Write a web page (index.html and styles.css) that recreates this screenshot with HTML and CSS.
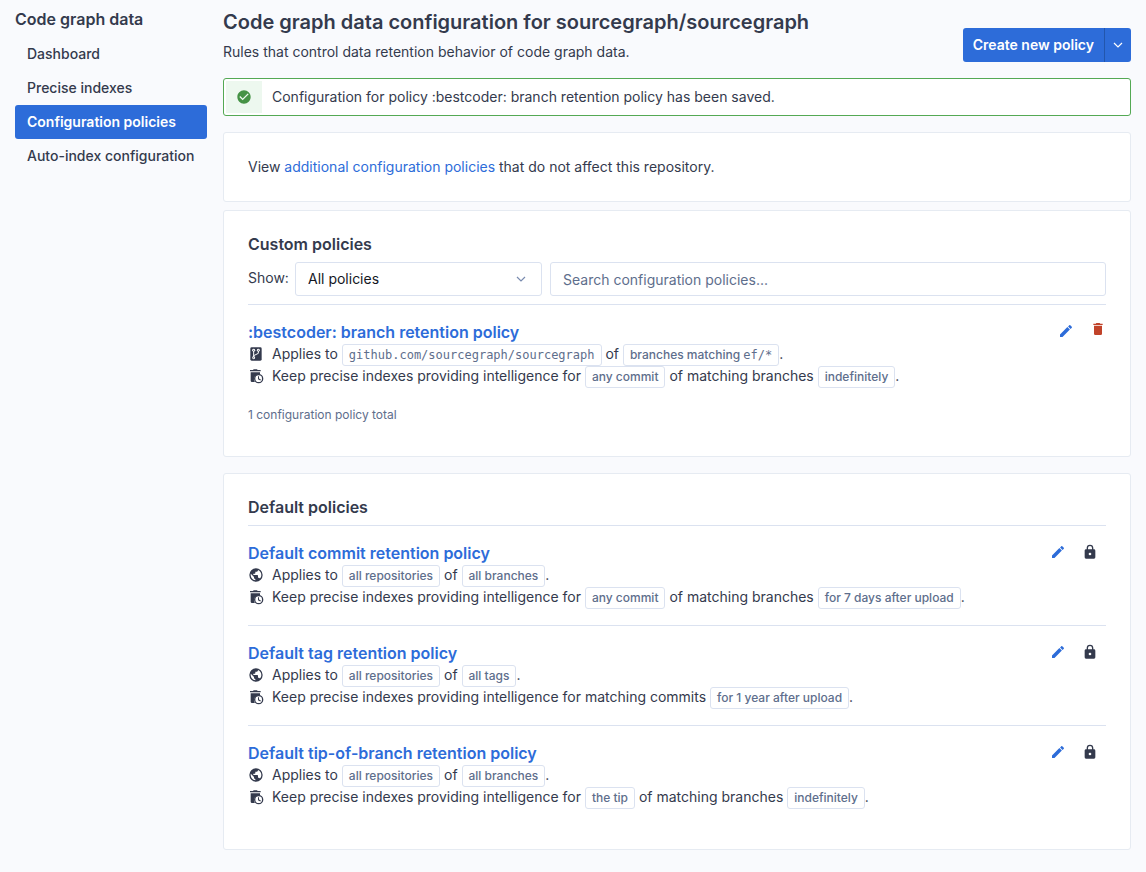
FILE: index.html
```html
<!DOCTYPE html>
<html lang="en">
<head>
<meta charset="utf-8">
<meta name="viewport" content="width=device-width, initial-scale=1">
<title>Code graph data configuration</title>
<link rel="stylesheet" href="styles.css">
</head>
<body>
<svg class="sprite" aria-hidden="true">
  <symbol id="check" viewBox="0 0 24 24"><path d="M12 2C6.5 2 2 6.5 2 12S6.5 22 12 22 22 17.5 22 12 17.5 2 12 2M10 17L5 12L6.41 10.59L10 14.17L17.59 6.58L19 8L10 17Z"/></symbol>
  <symbol id="earth" viewBox="0 0 24 24"><path d="M17.9,17.39C17.64,16.59 16.89,16 16,16H15V13A1,1 0 0,0 14,12H8V10H10A1,1 0 0,0 11,9V7H13A2,2 0 0,0 15,5V4.59C17.93,5.77 20,8.64 20,12C20,14.08 19.2,15.97 17.9,17.39M11,19.93C7.05,19.44 4,16.08 4,12C4,11.38 4.08,10.78 4.21,10.21L9,15V16A2,2 0 0,0 11,18M12,2A10,10 0 0,0 2,12A10,10 0 0,0 12,22A10,10 0 0,0 22,12A10,10 0 0,0 12,2Z"/></symbol>
  <symbol id="pencil" viewBox="0 0 24 24"><path d="M20.71,7.04C21.1,6.65 21.1,6 20.71,5.63L18.37,3.29C18,2.9 17.35,2.9 16.96,3.29L15.12,5.12L18.87,8.87M3,17.25V21H6.75L17.81,9.93L14.06,6.18L3,17.25Z"/></symbol>
  <symbol id="trash" viewBox="0 0 24 24"><path d="M19,4H15.5L14.5,3H9.5L8.5,4H5V6H19M6,19A2,2 0 0,0 8,21H16A2,2 0 0,0 18,19V7H6V19Z"/></symbol>
  <symbol id="lock" viewBox="0 0 24 24"><path d="M12,17A2,2 0 0,0 14,15C14,13.89 13.1,13 12,13A2,2 0 0,0 10,15A2,2 0 0,0 12,17M18,8A2,2 0 0,1 20,10V20A2,2 0 0,1 18,22H6A2,2 0 0,1 4,20V10C4,8.89 4.9,8 6,8H7V6A5,5 0 0,1 12,1A5,5 0 0,1 17,6V8H18M12,3A3,3 0 0,0 9,6V8H15V6A3,3 0 0,0 12,3Z"/></symbol>
  <symbol id="repo" viewBox="0 0 24 24"><rect x="3.5" y="2" width="17" height="20" rx="2"/><g fill="none" stroke="#fff" stroke-width="1.5"><path d="M8.5 7.5V17M15.5 7.5V11L8.5 14.5"/></g><g fill="#fff"><circle cx="8.5" cy="6.5" r="2.2"/><circle cx="15.5" cy="6.5" r="2.2"/><circle cx="8.5" cy="17.5" r="2.2"/></g><g><circle cx="8.5" cy="6.5" r=".8"/><circle cx="15.5" cy="6.5" r=".8"/><circle cx="8.5" cy="17.5" r=".8"/></g></symbol>
  <symbol id="expire" viewBox="0 0 24 24"><path d="M3 3H7.5L8.5 2H13.5L14.5 3H19V5H3ZM4 6.5H18V10A7 7 0 0 0 10.5 21H6A2 2 0 0 1 4 19Z"/><path fill-rule="evenodd" d="M16 9A7 7 0 1 1 16 23A7 7 0 0 1 16 9M16 11A5 5 0 1 0 16 21A5 5 0 0 0 16 11M15 12.5H16.5V15.8L19.3 17.4L18.5 18.7L15 16.7Z"/></symbol>
  <symbol id="chevron" viewBox="0 0 10 6"><path d="M1 1L5 5L9 1" fill="none" stroke="currentColor" stroke-width="1.2"/></symbol>
</svg>
<div class="page">
  <nav class="sidebar" aria-label="Code graph data">
    <h2 class="heading sidebar-heading">Code graph data</h2>
    <a class="nav-link" href="#">Dashboard</a>
    <a class="nav-link" href="#">Precise indexes</a>
    <a class="nav-link nav-active" href="#" aria-current="page">Configuration policies</a>
    <a class="nav-link" href="#">Auto-index configuration</a>
  </nav>
  <main class="main">
    <header class="header">
      <div>
        <h1 class="title">Code graph data configuration for sourcegraph/sourcegraph</h1>
        <p class="text">Rules that control data retention behavior of code graph data.</p>
      </div>
      <div class="button-group">
        <button class="button">Create new policy</button>
        <button class="button button-toggle" aria-label="More policy types"><svg class="chevron"><use href="#chevron"/></svg></button>
      </div>
    </header>
    <div class="alert" role="status">
      <span class="alert-icon"><svg class="icon"><use href="#check"/></svg></span>
      <span>Configuration for policy :bestcoder: branch retention policy has been saved.</span>
    </div>
    <section class="card">
      <p class="text">View <a class="link" href="#">additional configuration policies</a> that do not affect this repository.</p>
    </section>
    <section class="card card-custom">
      <h2 class="heading card-heading">Custom policies</h2>
      <div class="filters">
        <label class="filter-label" for="show">Show:</label>
        <div class="select-wrap">
          <select class="field select" id="show"><option>All policies</option></select>
          <svg class="chevron select-chevron"><use href="#chevron"/></svg>
        </div>
        <input class="field search" type="text" placeholder="Search configuration policies..." aria-label="Search configuration policies">
      </div>
      <article class="policy">
        <div class="policy-body">
          <h3 class="policy-title"><a class="link" href="#">:bestcoder: branch retention policy</a></h3>
          <div class="rule"><svg class="icon"><use href="#repo"/></svg><p class="rule-text">Applies to <span class="badge mono">github.com/sourcegraph/sourcegraph</span> of <span class="badge">branches matching <span class="mono">ef/*</span></span>.</p></div>
          <div class="rule"><svg class="icon"><use href="#expire"/></svg><p class="rule-text">Keep precise indexes providing intelligence for <span class="badge">any commit</span> of matching branches <span class="badge">indefinitely</span>.</p></div>
        </div>
        <div class="actions actions-custom">
          <button class="action edit" aria-label="Edit policy"><svg class="icon"><use href="#pencil"/></svg></button>
          <button class="action delete" aria-label="Delete policy"><svg class="icon"><use href="#trash"/></svg></button>
        </div>
      </article>
      <p class="total">1 configuration policy total</p>
    </section>
    <section class="card">
      <h2 class="heading card-heading">Default policies</h2>
      <article class="policy">
        <div class="policy-body">
          <h3 class="policy-title"><a class="link" href="#">Default commit retention policy</a></h3>
          <div class="rule"><svg class="icon"><use href="#earth"/></svg><p class="rule-text">Applies to <span class="badge">all repositories</span> of <span class="badge">all branches</span>.</p></div>
          <div class="rule"><svg class="icon"><use href="#expire"/></svg><p class="rule-text">Keep precise indexes providing intelligence for <span class="badge">any commit</span> of matching branches <span class="badge">for 7 days after upload</span>.</p></div>
        </div>
        <div class="actions">
          <button class="action edit" aria-label="Edit policy"><svg class="icon"><use href="#pencil"/></svg></button>
          <span class="action"><svg class="icon"><use href="#lock"/></svg></span>
        </div>
      </article>
      <article class="policy">
        <div class="policy-body">
          <h3 class="policy-title"><a class="link" href="#">Default tag retention policy</a></h3>
          <div class="rule"><svg class="icon"><use href="#earth"/></svg><p class="rule-text">Applies to <span class="badge">all repositories</span> of <span class="badge">all tags</span>.</p></div>
          <div class="rule"><svg class="icon"><use href="#expire"/></svg><p class="rule-text">Keep precise indexes providing intelligence for matching commits <span class="badge">for 1 year after upload</span>.</p></div>
        </div>
        <div class="actions">
          <button class="action edit" aria-label="Edit policy"><svg class="icon"><use href="#pencil"/></svg></button>
          <span class="action"><svg class="icon"><use href="#lock"/></svg></span>
        </div>
      </article>
      <article class="policy">
        <div class="policy-body">
          <h3 class="policy-title"><a class="link" href="#">Default tip-of-branch retention policy</a></h3>
          <div class="rule"><svg class="icon"><use href="#earth"/></svg><p class="rule-text">Applies to <span class="badge">all repositories</span> of <span class="badge">all branches</span>.</p></div>
          <div class="rule"><svg class="icon"><use href="#expire"/></svg><p class="rule-text">Keep precise indexes providing intelligence for <span class="badge">the tip</span> of matching branches <span class="badge">indefinitely</span>.</p></div>
        </div>
        <div class="actions">
          <button class="action edit" aria-label="Edit policy"><svg class="icon"><use href="#pencil"/></svg></button>
          <span class="action"><svg class="icon"><use href="#lock"/></svg></span>
        </div>
      </article>
    </section>
  </main>
</div>
</body>
</html>
```

FILE: styles.css
```css
:root {
  --ink: #343a4d;
  --muted: #5e6e8c;
  --blue: #2d6cd9;
  --line: #dbe2f0;
  --card-line: #e6ebf2;
}

* { box-sizing: border-box; }

body {
  margin: 0;
  background: #f9fafd;
  color: var(--ink);
  font: 14px/20px Inter, "Liberation Sans", sans-serif;
}

h1, h2, h3, p { margin: 0; }
a { text-decoration: none; }
button, input, select { font: inherit; }

.sprite { position: absolute; width: 0; height: 0; }
.icon { display: block; width: 16px; height: 16px; fill: currentColor; flex: none; }
.chevron { display: block; width: 10px; height: 6px; }
.link { color: var(--blue); }

.page { display: flex; gap: 16px; padding: 0 15px 22px; }

.sidebar { flex: none; width: 192px; padding-top: 10px; }
.heading { font-size: 16px; line-height: 18px; font-weight: 600; }
.sidebar-heading { margin-bottom: 9px; }
.nav-link {
  display: block;
  padding: 7px 12px;
  border-radius: 3px;
  color: var(--ink);
  font-weight: 500;
  white-space: nowrap;
}
.nav-active { background: var(--blue); color: #fff; font-weight: 600; }

.main { flex: 1; min-width: 0; }
.header {
  display: flex;
  justify-content: space-between;
  align-items: flex-end;
  padding: 10px 0 16px;
}
.title { margin-bottom: 8px; font-size: 20px; line-height: 24px; font-weight: 600; }

.button-group { display: flex; flex: none; }
.button {
  padding: 7px 10px;
  border: 0;
  border-radius: 3px 0 0 3px;
  background: var(--blue);
  color: #fff;
  font-weight: 600;
}
.button-toggle {
  padding: 0 8px;
  border-left: 1px solid #2256ad;
  border-radius: 0 3px 3px 0;
}

.alert {
  display: flex;
  align-items: center;
  gap: 10px;
  margin-bottom: 16px;
  padding: 2px;
  border: 1px solid #54a954;
  border-radius: 3px;
  background: #fff;
}
.alert-icon {
  display: grid;
  place-items: center;
  width: 36px;
  height: 32px;
  background: #edf8ef;
  color: #459245;
}

.card {
  padding: 24px;
  border: 1px solid var(--card-line);
  border-radius: 3px;
  background: #fff;
}
.card-heading { margin-bottom: 9px; }
.card-custom { margin: 8px 0 16px; }

.filters { display: flex; gap: 8px; margin-bottom: 8px; }
.filter-label { width: 39px; padding-top: 6px; white-space: nowrap; }
.select-wrap { position: relative; width: 247px; flex: none; }
.field {
  width: 100%;
  height: 34px;
  padding: 0 12px;
  border: 1px solid var(--line);
  border-radius: 3px;
  background: #fff;
  color: #14171f;
}
.select { appearance: none; }
.select-chevron {
  position: absolute;
  right: 16px;
  top: 14px;
  color: #798baf;
  pointer-events: none;
}
.search { flex: 1; min-width: 0; }
.search::placeholder { color: var(--muted); opacity: 1; }

.policy {
  display: flex;
  justify-content: space-between;
  padding: 16px 0 17px;
  border-top: 1px solid var(--line);
}
.policy-title { font-size: 16px; line-height: 22px; font-weight: 600; }
.rule { display: flex; align-items: center; gap: 8px; }
.rule-text { line-height: 22px; }
.badge {
  display: inline-block;
  margin: -1px 0;
  padding: 0 6px;
  border: 1px solid var(--line);
  border-radius: 3px;
  color: var(--muted);
  font-size: 12px;
  line-height: 20px;
  font-weight: 500;
}
.mono { font-family: "DejaVu Sans Mono", monospace; font-weight: 400; }

.actions { display: flex; align-items: flex-start; gap: 16px; padding: 2px 8px 0 16px; }
.actions-custom { padding: 0 0 0 16px; }
.actions-custom .edit { padding-top: 2px; }
.action { padding: 0; border: 0; background: none; color: var(--ink); }
.edit { color: var(--blue); }
.delete { color: #c1432a; }

.total { padding: 2px 0 8px; color: var(--muted); font-size: 12px; line-height: 18px; }
```
